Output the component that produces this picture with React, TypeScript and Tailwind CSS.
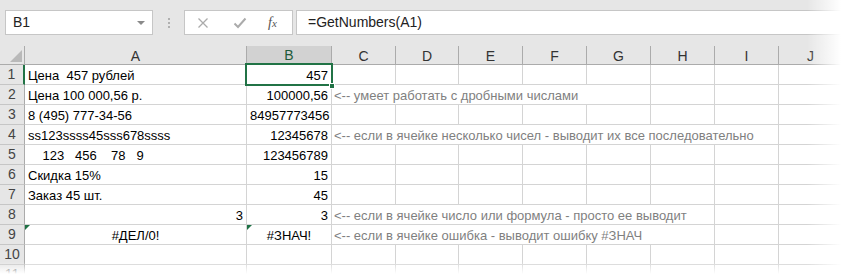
import React from "react";

const cols = ["A", "B", "C", "D", "E", "F", "G", "H", "I", "J"];

type Row = {
  a: string;
  aAlign?: "left" | "right" | "center";
  b: string;
  bAlign?: "right" | "center";
  note?: string;
  span?: number;
  err?: boolean;
};

const rows: Row[] = [
  { a: "Цена  457 рублей", b: "457" },
  { a: "Цена 100 000,56 р.", b: "100000,56", note: "<-- умеет работать с дробными числами", span: 5 },
  { a: "8 (495) 777-34-56", b: "84957773456" },
  { a: "ss123ssss45sss678ssss", b: "12345678", note: "<-- если в ячейке несколько чисел - выводит их все последовательно", span: 7 },
  { a: "    123   456    78   9", b: "123456789" },
  { a: "Скидка 15%", b: "15" },
  { a: "Заказ 45 шт.", b: "45" },
  { a: "3", aAlign: "right", b: "3", note: "<-- если в ячейке число или формула - просто ее выводит", span: 6 },
  { a: "#ДЕЛ/0!", aAlign: "center", b: "#ЗНАЧ!", bAlign: "center", note: "<-- если в ячейке ошибка - выводит ошибку #ЗНАЧ", span: 6, err: true },
  { a: "", b: "" },
  { a: "", b: "" },
];

const cellBase = "h-[20px] border-r border-b border-[#d4d4d4] whitespace-pre leading-[19px] pt-[1px] text-[13px]";

function ErrMark() {
  return <span className="absolute left-0 top-0 w-0 h-0 border-t-[5px] border-r-[5px] border-t-[#1e7145] border-r-transparent" />;
}

export default function App() {
  return (
    <div className="relative w-[841px] h-[274px] overflow-hidden bg-white" style={{ fontFamily: '"Liberation Sans", Arial, sans-serif' }}>
      {/* formula bar */}
      <div className="h-[46px] bg-[#e6e6e6] flex items-start pt-[10px] pl-[5px]">
        <div className="w-[148px] h-[25px] bg-white border border-[#c6c6c6] flex items-center justify-between pl-[7px] pr-[7px]">
          <span className="text-[14px] text-[#222]">B1</span>
          <span className="w-0 h-0 border-l-[4px] border-r-[4px] border-t-[4px] border-l-transparent border-r-transparent border-t-[#8a8a8a]" />
        </div>
        <div className="w-[31px] h-[25px] flex flex-col items-center justify-center gap-[2px]">
          <span className="w-[2px] h-[2px] bg-[#b0b0b0]" />
          <span className="w-[2px] h-[2px] bg-[#b0b0b0]" />
          <span className="w-[2px] h-[2px] bg-[#b0b0b0]" />
        </div>
        <div className="w-[109px] h-[25px] bg-white border border-[#c6c6c6] flex items-center">
          <svg width="12" height="12" viewBox="0 0 12 12" className="ml-[12px]">
            <path d="M1.5 1.5 L10.5 10.5 M10.5 1.5 L1.5 10.5" stroke="#ababab" strokeWidth="1.3" fill="none" />
          </svg>
          <svg width="14" height="12" viewBox="0 0 14 12" className="ml-[24px]">
            <path d="M1.5 6.5 L5 10 L12.5 1.5" stroke="#ababab" strokeWidth="2" fill="none" />
          </svg>
          <span className="ml-[21px] text-[14px] text-[#555] italic" style={{ fontFamily: '"Liberation Serif", serif' }}>
            f<span className="text-[11px]">x</span>
          </span>
        </div>
        <div className="ml-[3px] flex-1 h-[25px] bg-white border-y border-l border-[#c6c6c6] flex items-center pl-[11px]">
          <span className="text-[14px] text-[#222]">=GetNumbers(A1)</span>
        </div>
      </div>

      {/* sheet */}
      <div className="relative grid grid-cols-[25px_222px_85px_64px_63px_64px_64px_64px_64px_64px_64px]">
        {/* header row */}
        <div className="h-[19px] bg-[#e6e6e6] border-r border-b border-[#ababab] relative">
          <svg width="25" height="19" viewBox="0 0 25 19" className="absolute inset-0">
            <polygon points="10,16 22,16 22,4" fill="#b9b9b9" />
          </svg>
        </div>
        {cols.map((c) => (
          <div
            key={c}
            className={`h-[19px] flex items-center justify-center text-[14px] border-r ${
              c === "B" ? "bg-[#d2d2d2] text-[#1e5b3a] border-b-2 border-b-[#217346] border-r-[#ababab]" : "bg-[#e6e6e6] text-[#333] border-b border-[#ababab]"
            }`}
          >
            <span className="pt-[2px]">{c}</span>
          </div>
        ))}

        {rows.map((r, i) => {
          const n = i + 1;
          const rest = 8 - (r.span ?? 0);
          return (
            <React.Fragment key={n}>
              <div
                className={`h-[20px] bg-[#e6e6e6] flex items-center justify-center text-[14px] text-[#444] border-b border-[#c6c6c6] ${
                  n === 1 ? "border-r-2 border-r-[#217346] bg-[#e0e0e0]" : "border-r border-r-[#ababab]"
                }`}
              >
                {n}
              </div>
              <div
                className={`${cellBase} relative px-[3px] text-black ${
                  r.aAlign === "right" ? "text-right" : r.aAlign === "center" ? "text-center" : "text-left"
                }`}
              >
                {r.err && <ErrMark />}
                {r.a}
              </div>
              <div className={`${cellBase} relative px-[3px] text-black ${r.bAlign === "center" ? "text-center" : "text-right"}`}>
                {r.err && <ErrMark />}
                {r.b}
              </div>
              {r.note && (
                <div
                  className={`${cellBase} pl-[2px] text-[#7f7f7f]`}
                  style={{ gridColumn: `span ${r.span}` }}
                >
                  {r.note}
                </div>
              )}
              {Array.from({ length: rest }).map((_, k) => (
                <div key={k} className={cellBase} />
              ))}
            </React.Fragment>
          );
        })}

        {/* active cell B1 */}
        <div className="absolute left-[245px] top-[17px] w-[88px] h-[23px] border-2 border-[#217346]" />
        <div className="absolute left-[329px] top-[37px] w-[6px] h-[6px] bg-[#217346] border border-white" />
      </div>

      {/* torn-edge fades */}
      <div className="absolute top-0 right-0 h-full w-[34px] bg-linear-to-r from-white/0 to-white" />
      <div className="absolute bottom-0 left-0 w-full h-[12px] bg-linear-to-b from-white/0 to-white" />
    </div>
  );
}
